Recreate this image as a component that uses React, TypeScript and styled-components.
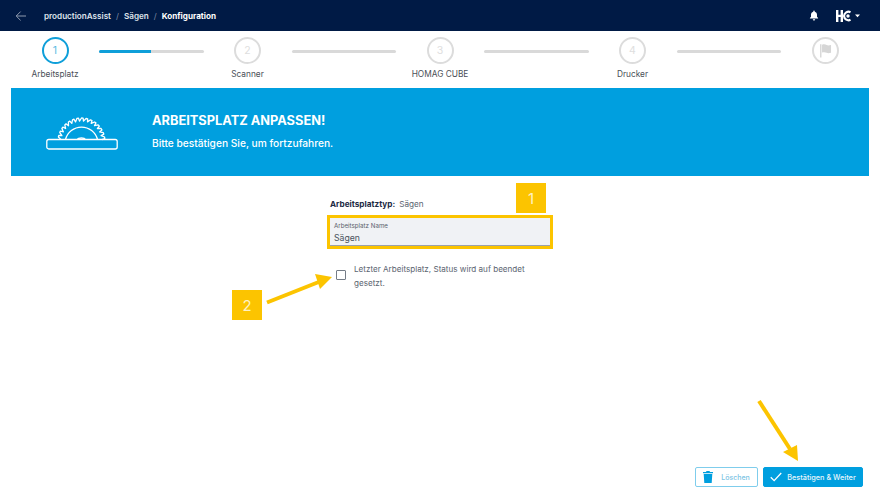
import React from "react";
import styled, { createGlobalStyle } from "styled-components";

const Global = createGlobalStyle`
  html, body { margin: 0; padding: 0; background: #fff; }
  body { font-family: Inter, "Liberation Sans", sans-serif; overflow: hidden; }
  #root { width: 880px; height: 496px; }
`;

const Page = styled.div`
  position: relative;
  width: 880px;
  height: 496px;
  display: flex;
  flex-direction: column;
  background: #fff;
`;

const Header = styled.header`
  height: 31px;
  flex: none;
  background: #001a45;
  display: flex;
  align-items: center;
  padding: 0 15px;
  box-sizing: border-box;
  color: #fff;
`;

const BackIcon = styled.svg`
  width: 12px;
  height: 12px;
  flex: none;
  margin-right: 17px;
`;

const Crumbs = styled.nav`
  display: flex;
  align-items: center;
  gap: 5px;
  font-size: 8.15px;
  font-weight: 600;
  color: #dfe4ec;
  flex: 1;
`;

const Sep = styled.span`
  color: #7f8ca3;
  font-weight: 400;
`;

const Current = styled.span`
  font-weight: 700;
  color: #fff;
`;

const HeaderIcons = styled.div`
  display: flex;
  align-items: center;
  gap: 17px;
  padding-right: 5px;
`;

const Stepper = styled.div`
  height: 57px;
  flex: none;
  padding: 0 11px;
  display: flex;
  box-sizing: border-box;
`;

const Step = styled.div`
  width: 88px;
  flex: none;
  display: flex;
  flex-direction: column;
  align-items: center;
  padding-top: 6px;
`;

const Circle = styled.div<{ $active?: boolean }>`
  width: 27px;
  height: 27px;
  box-sizing: border-box;
  border-radius: 50%;
  border: 2px solid ${(p) => (p.$active ? "#0f9fd9" : "#dcdcdc")};
  color: ${(p) => (p.$active ? "#5cbce3" : "#dedede")};
  font-size: 10.5px;
  display: flex;
  align-items: center;
  justify-content: center;
`;

const StepLabel = styled.div`
  margin-top: 4px;
  font-size: 8.3px;
  line-height: 12px;
  color: #4a4f57;
  white-space: nowrap;
`;

const Connector = styled.div`
  flex: 1;
  height: 3px;
  margin-top: 19px;
  border-radius: 2px;
  background: #d9d9d9;
  overflow: hidden;
`;

const ConnectorFill = styled.div`
  height: 100%;
  background: #0f9fd9;
`;

const Banner = styled.section`
  height: 88px;
  flex: none;
  margin: 0 11px;
  background: #009fdf;
  color: #fff;
  display: flex;
  align-items: center;
  padding-left: 35px;
  box-sizing: border-box;
`;

const SawIcon = styled.svg`
  width: 72px;
  height: 46px;
  flex: none;
  margin-right: 34px;
  margin-top: -11px;
`;

const BannerText = styled.div`
  display: flex;
  flex-direction: column;
  gap: 9px;
  margin-top: -2px;
`;

const BannerTitle = styled.div`
  font-size: 12.8px;
  line-height: 15px;
  font-weight: 700;
`;

const BannerSub = styled.div`
  font-size: 10.2px;
  line-height: 13px;
  font-weight: 500;
`;

const Main = styled.main`
  flex: 1;
  display: flex;
  flex-direction: column;
  align-items: center;
`;

const Form = styled.div`
  width: 220px;
  padding-top: 22px;
  display: flex;
  flex-direction: column;
`;

const TypeRow = styled.div`
  display: flex;
  gap: 4px;
  font-size: 8.2px;
  line-height: 12px;
  color: #5b6470;
`;

const TypeLabel = styled.span`
  font-weight: 700;
  color: #1d2b44;
`;

const Field = styled.div`
  margin-top: 8px;
  height: 28px;
  background: #f0f2f5;
  border-bottom: 1px solid #9aa1ab;
  box-sizing: border-box;
  padding: 4px 4px 0;
  position: relative;
  outline: 3px solid #fcc400;
  outline-offset: 0;
`;

const FieldLabel = styled.div`
  font-size: 6.2px;
  line-height: 8px;
  color: #59616c;
`;

const FieldValue = styled.div`
  margin-top: 2px;
  font-size: 8.7px;
  line-height: 13px;
  color: #4a525d;
`;

const CheckRow = styled.label`
  margin-top: 17px;
  display: flex;
  gap: 8px;
  align-items: flex-start;
  padding-left: 6px;
`;

const CheckBox = styled.span`
  width: 10px;
  height: 10px;
  flex: none;
  margin-top: 7px;
  border: 1.5px solid #747c87;
  border-radius: 1px;
  box-sizing: border-box;
`;

const CheckText = styled.span`
  width: 178px;
  font-size: 8.1px;
  line-height: 13.5px;
  color: #5b6470;
`;

const Footer = styled.footer`
  flex: none;
  display: flex;
  justify-content: flex-end;
  gap: 5px;
  padding: 0 17px 9px 0;
`;

const Button = styled.button<{ $primary?: boolean }>`
  height: 20px;
  width: ${(p) => (p.$primary ? "100px" : "63px")};
  box-sizing: border-box;
  border-radius: 2px;
  border: 1px solid ${(p) => (p.$primary ? "#009fdf" : "#7fcdec")};
  background: ${(p) => (p.$primary ? "#009fdf" : "#fff")};
  color: ${(p) => (p.$primary ? "#e6f6fc" : "#7cc4e4")};
  font-family: inherit;
  font-size: ${(p) => (p.$primary ? "7.3px" : "7px")};
  font-weight: 500;
  display: flex;
  align-items: center;
  justify-content: center;
  gap: ${(p) => (p.$primary ? "5px" : "8px")};
  padding: 0;
`;

const Badge = styled.div<{ $x: number; $y: number }>`
  position: absolute;
  left: ${(p) => p.$x}px;
  top: ${(p) => p.$y}px;
  width: 30px;
  height: 30px;
  background: #fcc400;
  color: #fff2c4;
  font-size: 15px;
  display: flex;
  align-items: center;
  justify-content: center;
`;

const ArrowLayer = styled.svg`
  position: absolute;
  left: 0;
  top: 0;
  width: 880px;
  height: 496px;
  pointer-events: none;
`;

function gearPath(cx: number, cy: number, inner: number, outer: number, n: number) {
  const start = Math.PI * 1.03;
  const end = Math.PI * 1.97;
  const pts: string[] = [];
  for (let i = 0; i < n; i++) {
    const s = (end - start) / n;
    const a = start + s * i;
    const p = [
      [inner, a],
      [outer, a + s * 0.5],
      [outer, a + s * 0.85],
      [inner, a + s],
    ];
    p.forEach(([r, t]) => pts.push(`${(cx + r * Math.cos(t)).toFixed(1)} ${(cy + r * Math.sin(t)).toFixed(1)}`));
  }
  return "M" + pts.join(" L");
}

const steps = ["Arbeitsplatz", "Scanner", "HOMAG CUBE", "Drucker"];

export default function App() {
  return (
    <Page>
      <Global />
      <Header>
        <BackIcon viewBox="0 0 12 12" fill="none" stroke="#8f9bb0" strokeWidth="1">
          <path d="M11 6H1.2M5.6 1.6 1.2 6l4.4 4.4" />
        </BackIcon>
        <Crumbs>
          <span>productionAssist</span>
          <Sep>/</Sep>
          <span>Sägen</span>
          <Sep>/</Sep>
          <Current>Konfiguration</Current>
        </Crumbs>
        <HeaderIcons>
          <svg width="10" height="11" viewBox="0 0 11 12" fill="#fff">
            <path d="M5.5 0.6c.5 0 .8.3.8.8v.4c1.600.4 2.500 1.700 2.500 3.400v2.200l1.200 1.400v.6H1v-.6l1.200-1.400V5.200c0-1.700.9-3 2.500-3.400v-.4c0-.5.3-.8.8-.8zM4.200 10h2.600c0 .8-.6 1.400-1.300 1.400S4.200 10.800 4.200 10z" />
          </svg>
          <svg width="24" height="12" viewBox="0 0 24 12" fill="#fff">
            <path d="M0 0h2.400v4.800h2.200V0h2.400v12H4.600V7H2.400v5H0z" />
            <path d="M14.500 2.200A4.500 4.500 0 0 0 8 6a4.500 4.500 0 0 0 6.500 3.800" fill="none" stroke="#fff" strokeWidth="2.200" />
            <circle cx="12" cy="6" r="1.700" />
            <path d="M19 4.500h5l-2.500 2.800z" />
          </svg>
        </HeaderIcons>
      </Header>

      <Stepper>
        {steps.map((label, i) => (
          <React.Fragment key={label}>
            <Step>
              <Circle $active={i === 0}>{i + 1}</Circle>
              <StepLabel>{label}</StepLabel>
            </Step>
            <Connector>{i === 0 && <ConnectorFill style={{ width: "50%" }} />}</Connector>
          </React.Fragment>
        ))}
        <Step>
          <Circle>
            <svg width="15" height="15" viewBox="0 0 13 13" fill="#d6d6d6">
              <path d="M1.800 1h1.200v11.500H1.800zM3.500 1.500c1.500-.6 2.800-.4 4 .2 1 .5 2 .5 3.800 0v6.800c-1.800.5-2.800.5-3.800 0-1.200-.6-2.500-.8-4-.2z" />
            </svg>
          </Circle>
        </Step>
      </Stepper>

      <Banner>
        <SawIcon viewBox="0 0 72 46" fill="none" stroke="#fff" strokeWidth="1.300" strokeLinejoin="round">
          <path d={gearPath(35.5, 37.5, 20.5, 23.5, 15)} />
          <path d="M19.500 35.500a16.500 16.500 0 0 1 32 0" />
          <path d="M31.500 35.500c.8-2 7-2 8 0" />
          <rect x="0.800" y="35.500" width="70.400" height="9.500" rx="2" />
        </SawIcon>
        <BannerText>
          <BannerTitle>ARBEITSPLATZ ANPASSEN!</BannerTitle>
          <BannerSub>Bitte bestätigen Sie, um fortzufahren.</BannerSub>
        </BannerText>
      </Banner>

      <Main>
        <Form>
          <TypeRow>
            <TypeLabel>Arbeitsplatztyp:</TypeLabel>
            <span>Sägen</span>
          </TypeRow>
          <Field>
            <FieldLabel>Arbeitsplatz Name</FieldLabel>
            <FieldValue>Sägen</FieldValue>
          </Field>
          <CheckRow>
            <CheckBox />
            <CheckText>Letzter Arbeitsplatz, Status wird auf beendet gesetzt.</CheckText>
          </CheckRow>
        </Form>
      </Main>

      <Footer>
        <Button>
          <svg width="10" height="12" viewBox="0 0 10 12" fill="#009fdf">
            <path d="M3.500 0h3l.5 1h3v1.300H0V1h3zM.7 3h8.600l-.6 9H1.300z" />
          </svg>
          Löschen
        </Button>
        <Button $primary>
          <svg width="12" height="10" viewBox="0 0 11 9" fill="none" stroke="#fff" strokeWidth="1.200">
            <path d="M.7 4.800 3.800 7.800 10.300.8" />
          </svg>
          Bestätigen &amp; Weiter
        </Button>
      </Footer>

      <Badge $x={516} $y={183}>1</Badge>
      <Badge $x={232} $y={290}>2</Badge>
      <ArrowLayer viewBox="0 0 880 496">
        <path d="M267 302.500 320 281.500" stroke="#fcc400" strokeWidth="4" />
        <path d="M332 277 315 274 320 289z" fill="#fcc400" />
        <path d="M759 401 790 449" stroke="#fcc400" strokeWidth="4" />
        <path d="M798 461 797 445 783 452z" fill="#fcc400" />
      </ArrowLayer>
    </Page>
  );
}
